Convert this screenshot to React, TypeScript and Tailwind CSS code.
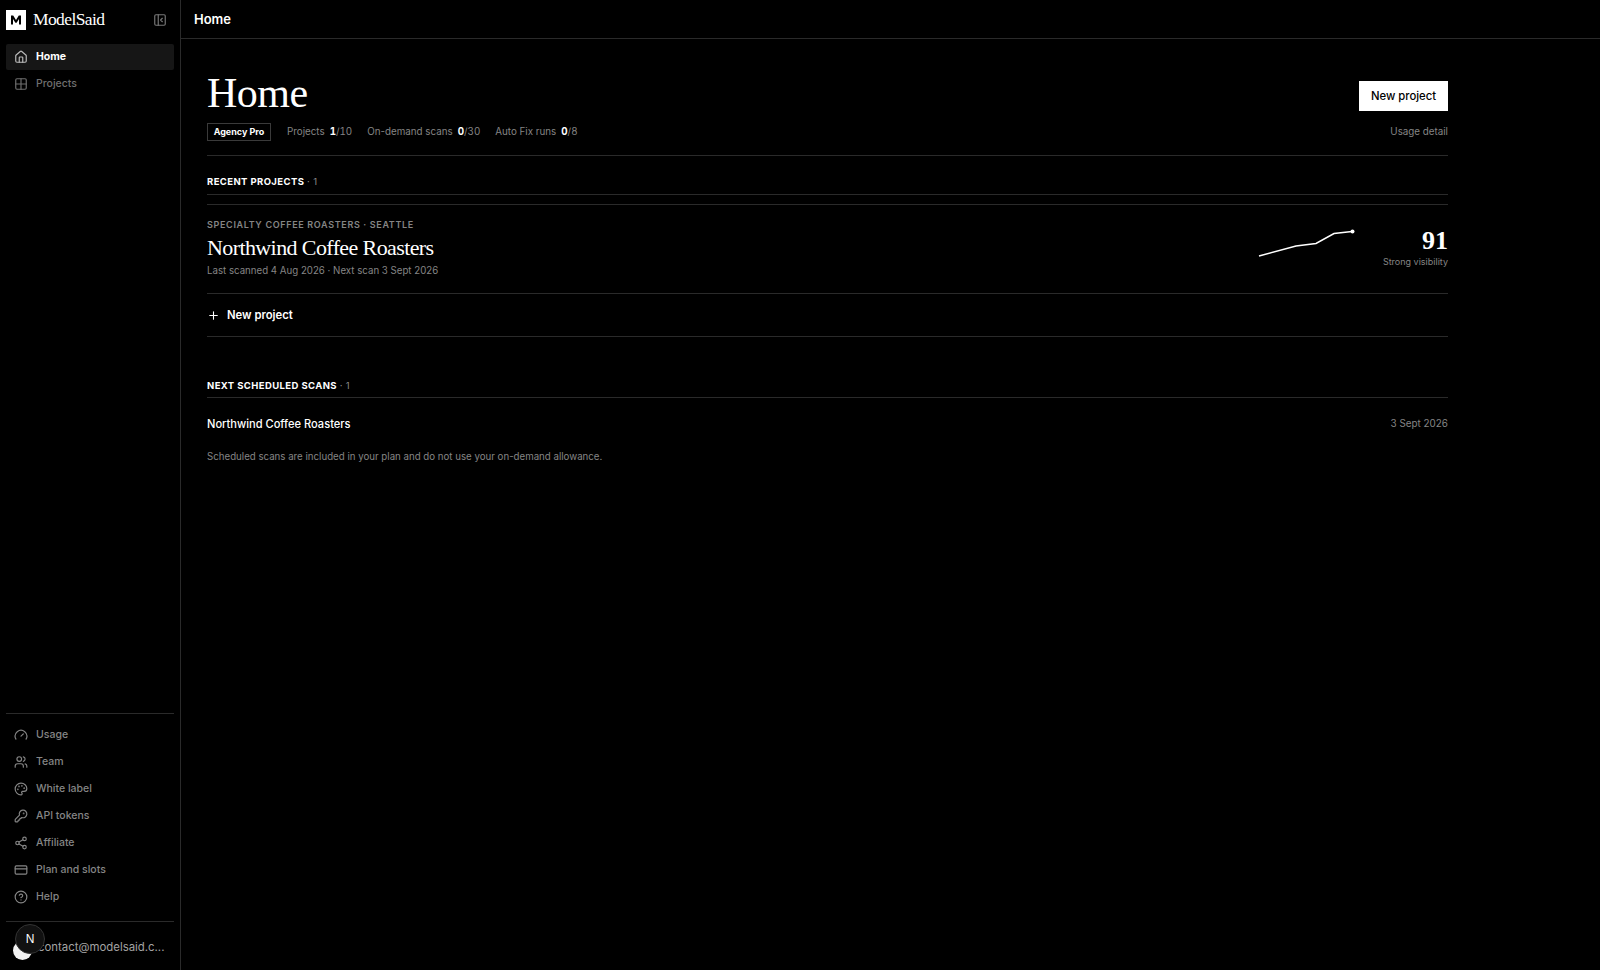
import { CircleHelp, CreditCard, Gauge, Grid2x2, House, KeyRound, Palette, PanelLeftClose, Plus, Share2, Users } from 'lucide-react';

const bottomLinks = [
  { label: 'Usage', icon: Gauge },
  { label: 'Team', icon: Users },
  { label: 'White label', icon: Palette },
  { label: 'API tokens', icon: KeyRound },
  { label: 'Affiliate', icon: Share2 },
  { label: 'Plan and slots', icon: CreditCard },
  { label: 'Help', icon: CircleHelp },
];

const stats = [
  { label: 'Projects', used: '1', total: '/10' },
  { label: 'On-demand scans', used: '0', total: '/30' },
  { label: 'Auto Fix runs', used: '0', total: '/8' },
];

function Sidebar() {
  return (
    <aside className="flex h-full w-[181px] shrink-0 flex-col border-r border-[#2a2a2a] px-[6px]">
      {/* Logo */}
      <div className="flex h-[40px] items-center justify-between pr-[7px]">
        <div className="flex items-center gap-[7px]">
          <div className="flex h-5 w-5 items-center justify-center bg-white">
            <svg width="12" height="10" viewBox="0 0 12 10">
              <path d="M1 9.500V.5h2.200L6 5l2.800-4.500H11v9H9V4L6.600 7.800H5.400L3 4v5.500z" fill="#000" />
            </svg>
          </div>
          <span className="font-['Liberation_Serif',serif] text-[17.500px] leading-none tracking-[-0.6px] text-white">ModelSaid</span>
        </div>
        <PanelLeftClose size={14} className="text-[#777]" />
      </div>

      <nav className="mt-[4px] flex flex-col gap-[1px]">
        <a className="flex h-[26px] items-center gap-[8px] rounded-[2px] bg-[#161616] px-[8px] text-[10.500px] font-bold text-white">
          <House size={14} className="text-[#bbb]" />
          Home
        </a>
        <a className="flex h-[26px] items-center gap-[8px] px-[8px] text-[10.500px] font-medium text-[#6f6f6f]">
          <Grid2x2 size={14} />
          Projects
        </a>
      </nav>

      {/* Bottom links */}
      <div className="mt-auto border-t border-[#2a2a2a] pt-[8px] pb-[10.500px]">
        {bottomLinks.map((link) => (
          <a key={link.label} className="flex h-[27px] items-center gap-[8px] px-[8px] text-[10.500px] font-medium text-[#858585]">
            <link.icon size={14} />
            {link.label}
          </a>
        ))}
      </div>

      <div className="relative flex h-[49px] items-center border-t border-[#2a2a2a] pt-[4px] pl-[7px]">
        <svg width="19" height="19" viewBox="0 0 19 19" className="mt-[5px] shrink-0">
          <circle cx="9.500" cy="9.500" r="9.500" fill="#f2f2f2" />
        </svg>
        <span className="ml-[6px] text-[11.400px] whitespace-nowrap text-[#a3a3a3]">contact@modelsaid.c...</span>
        {/* dev indicator over the avatar */}
        <div className="absolute top-[2px] left-[9px] flex h-[30px] w-[30px] items-center justify-center rounded-full border border-[#333] bg-[#111] font-['Liberation_Sans',sans-serif] text-[12px] text-white">
          N
        </div>
      </div>
    </aside>
  );
}

function SectionTitle({ title, count, gap }: { title: string; count: number; gap: string }) {
  return (
    <div className={`border-b border-[#2a2a2a] ${gap} text-[9.500px] leading-[15px] font-bold tracking-[0.4px] text-white`}>
      {title} <span className="font-normal text-[#8a8a8a]">· {count}</span>
    </div>
  );
}

export default function App() {
  return (
    <div className="flex h-[970px] w-full overflow-hidden bg-black font-['Inter',sans-serif] text-white">
      <Sidebar />
      <div className="flex min-w-0 flex-1 flex-col">
        <header className="flex h-[39px] items-center border-b border-[#2a2a2a] px-[13px] pt-[2px] text-[13px] font-semibold">Home</header>

        <main className="w-[1267px] pt-[29px] pl-[26px]">
          <div className="flex items-start justify-between">
            <h1 className="font-['Liberation_Serif',serif] text-[42px] leading-[50px] tracking-[-0.5px] text-white">Home</h1>
            <button className="mt-[13px] h-[30px] w-[89px] bg-white text-[11.300px] font-medium text-black">New project</button>
          </div>

          <div className="mt-[5px] flex h-[18px] items-center justify-between text-[9.800px] text-[#858585]">
            <div className="flex items-center">
              <span className="mr-[16px] flex h-[18px] w-[64px] items-center justify-center border border-[#3a3a3a] text-[9px] font-bold text-white">Agency Pro</span>
              <div className="flex gap-[15px]">
                {stats.map((stat) => (
                  <span key={stat.label}>
                    {stat.label}
                    <span className="tabular-nums">
                      <b className="ml-[5px] font-bold text-white">{stat.used}</b>
                      {stat.total}
                    </span>
                  </span>
                ))}
              </div>
            </div>
            <a>Usage detail</a>
          </div>

          <div className="mt-[14px] border-t border-[#2a2a2a] pt-[18px]">
            <SectionTitle title="RECENT PROJECTS" count={1} gap="pb-[5px]" />
          </div>

          <div className="mt-[9px] flex h-[90px] items-center justify-between border-y border-[#2a2a2a] pb-[3px]">
            <div>
              <div className="text-[9px] leading-[14px] font-semibold tracking-[0.66px] text-[#858585]">SPECIALTY COFFEE ROASTERS · SEATTLE</div>
              <div className="font-['Liberation_Serif',serif] text-[22px] leading-[31px] tracking-[-0.6px] text-white">Northwind Coffee Roasters</div>
              <div className="text-[9.700px] leading-[15px] text-[#858585]">Last scanned 4 Aug 2026 · Next scan 3 Sept 2026</div>
            </div>
            <div className="flex items-center">
              <svg width="98" height="30" viewBox="0 0 98 30" className="mr-[27px] mb-[8px]">
                <polyline points="1,27 38,17 58,14.500 76,4.500 94,2.500" fill="none" stroke="#fff" strokeWidth="1.500" />
                <circle cx="94.500" cy="2.500" r="2" fill="#fff" />
              </svg>
              <div className="mt-[2px] text-right">
                <div className="font-['Liberation_Serif',serif] text-[26px] leading-[26px] font-bold text-white">91</div>
                <div className="text-[9px] leading-[15px] text-[#858585]">Strong visibility</div>
              </div>
            </div>
          </div>

          <div className="flex h-[43px] items-center gap-[7px] border-b border-[#2a2a2a] text-[11.300px] font-semibold text-white">
            <Plus size={13} />
            New project
          </div>

          <div className="mt-[41px]">
            <SectionTitle title="NEXT SCHEDULED SCANS" count={1} gap="pb-[4px]" />
          </div>

          <div className="flex h-[52px] items-center justify-between">
            <span className="text-[11.100px] font-medium text-white">Northwind Coffee Roasters</span>
            <span className="mb-[1px] text-[9.900px] text-[#858585]">3 Sept 2026</span>
          </div>
          <p className="mt-[-1px] text-[9.700px] leading-[15px] text-[#858585]">Scheduled scans are included in your plan and do not use your on-demand allowance.</p>
        </main>
      </div>
    </div>
  );
}
